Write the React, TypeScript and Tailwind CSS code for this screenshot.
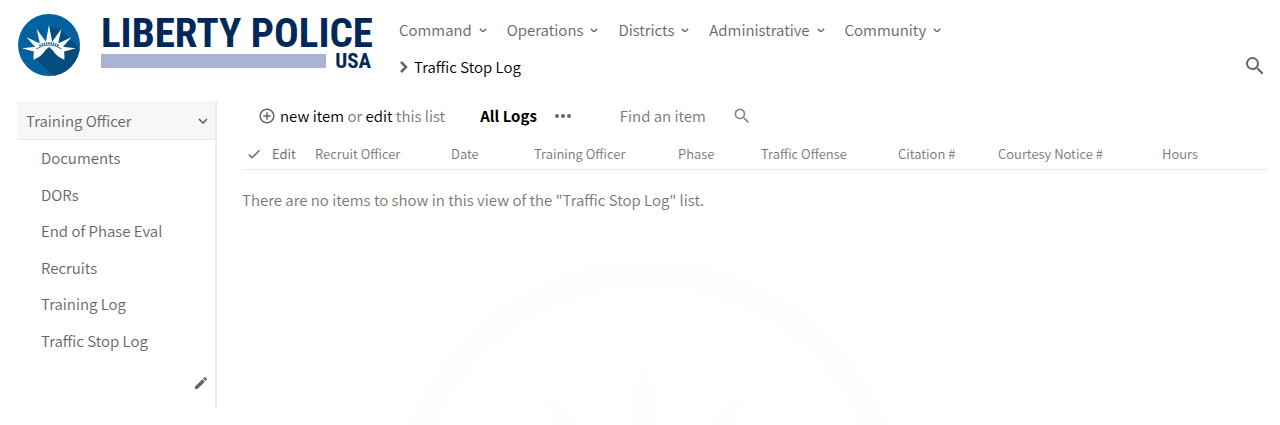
import React from "react";
import { MdAddCircleOutline, MdEdit, MdSearch, MdCheck } from "react-icons/md";

const navItems = ["Command", "Operations", "Districts", "Administrative", "Community"];

const sideItems = [
  "Documents",
  "DORs",
  "End of Phase Eval",
  "Recruits",
  "Training Log",
  "Traffic Stop Log",
];

const columns = [
  { label: "Recruit Officer", width: "w-[136px]" },
  { label: "Date", width: "w-[83px]" },
  { label: "Training Officer", width: "w-[144px]" },
  { label: "Phase", width: "w-[83px]" },
  { label: "Traffic Offense", width: "w-[137px]" },
  { label: "Citation #", width: "w-[100px]" },
  { label: "Courtesy Notice #", width: "w-[164px]" },
  { label: "Hours", width: "" },
];

function Chevron({ className }: { className: string }) {
  return (
    <svg viewBox="0 0 10 6" className={className} fill="none" stroke="currentColor" strokeWidth="1.7" aria-hidden="true">
      <path d="M1 1l4 4 4-4" />
    </svg>
  );
}

function CrownEmblem() {
  return (
    <svg viewBox="0 0 186 186" className="size-[62px] shrink-0" aria-hidden="true">
      <defs>
        <clipPath id="disc">
          <circle cx="93" cy="93" r="93" />
        </clipPath>
      </defs>
      <circle cx="93" cy="93" r="93" fill="#02619f" />
      <g clipPath="url(#disc)">
        <path d="M93 36L127 46L186 105V186H108L48 130L93 90Z" fill="#044d7e" />
      </g>
      <g fill="#fff">
        <path d="M93 33l9 48H84z" />
        <path d="M56 45l26 36-16 10z" />
        <path d="M130 45l-26 36 16 10z" />
        <path d="M26 70l38 18-10 14z" />
        <path d="M160 70l-38 18 10 14z" />
        <path d="M12 103l42-5-4 15z" />
        <path d="M174 103l-42-5 4 15z" />
        <path d="M47 137C45 116 50 98 62 88Q93 72 124 88C136 98 141 116 139 137Q115 128 104 109L93 99L82 109Q71 128 47 137Z" />
      </g>
      <path d="M55 105Q93 80 131 105" fill="none" stroke="#02558c" strokeWidth="2.5" />
      <path d="M64 95Q93 80 122 95" fill="none" stroke="#02558c" strokeWidth="6" strokeDasharray="4 3" />
    </svg>
  );
}

function Watermark() {
  return (
    <div className="pointer-events-none absolute inset-0 -z-10 flex justify-center overflow-hidden pt-[262px]">
      <svg viewBox="0 0 530 514" className="h-[514px] w-[530px] shrink-0" aria-hidden="true">
        <circle cx="273" cy="257" r="245" fill="none" stroke="#fdfdfd" strokeWidth="23" />
        <g fill="#fdfdfd">
          <path d="M265 108q4-5 8 0l12 92h-32z" />
          <path d="M172 136q4-3 7 1l55 63h-42z" />
          <path d="M366 136q-4-3-7 1l-55 63h42z" />
        </g>
      </svg>
    </div>
  );
}

export default function App() {
  return (
    <div className="relative isolate min-h-screen bg-white font-['Noto_Sans_CJK_SC','Noto_Sans_CJK_JP',sans-serif] text-[15px] leading-5 font-[350] text-[#666666]">
      <Watermark />
      <header className="flex pt-[14px] pr-[13px] pl-[18px]">
        <a href="#home" className="flex gap-[21px]" aria-label="Liberty Police USA">
          <CrownEmblem />
          <div className="flex w-[270px] flex-col font-['Roboto_Condensed','Liberation_Sans_Narrow',sans-serif] font-bold text-[#00285a]">
            <span className="h-10 text-[41px] leading-[38px] whitespace-nowrap">LIBERTY POLICE</span>
            <span className="flex items-center justify-between">
              <span className="h-[14px] w-[225px] bg-[#abb3d4]" />
              <span className="text-[21px] leading-[14px]">USA</span>
            </span>
          </div>
        </a>
        <div className="flex grow flex-col pl-[28px]">
          <nav className="flex gap-5 pt-[6px]">
            {navItems.map((item) => (
              <a key={item} href="#nav" className="flex items-center gap-[7px]">
                {item}
                <Chevron className="w-[8px]" />
              </a>
            ))}
          </nav>
          <div className="flex items-center justify-between pt-[14px]">
            <h1 className="flex items-center gap-[5px] pt-[2px] text-black">
              <svg viewBox="0 0 10 12" className="h-3 w-[10px] text-[#666666]" fill="none" stroke="currentColor" strokeWidth="2.6" aria-hidden="true">
                <path d="M2 1l5 5-5 5" />
              </svg>
              Traffic Stop Log
            </h1>
            <button type="button" aria-label="Search">
              <MdSearch className="size-6" />
            </button>
          </div>
        </div>
      </header>

      <div className="flex pt-[23px] pr-3 pl-[17px]">
        <aside className="flex h-[307px] w-[200px] shrink-0 flex-col border-r-2 border-[#ebebeb]">
          <a href="#training" className="flex h-[39px] items-center justify-between border-b border-[#ebebeb] bg-[#f7f7f7] pt-[2px] pr-[7px] pl-[9px]">
            Training Officer
            <Chevron className="w-[10px]" />
          </a>
          <ul className="grid h-[219px] auto-rows-fr pl-6">
            {sideItems.map((item) => (
              <li key={item} className="flex items-center">
                <a href="#list">{item}</a>
              </li>
            ))}
          </ul>
          <button type="button" aria-label="Edit links" className="mt-4 mr-[6px] self-end">
            <MdEdit className="size-4" />
          </button>
        </aside>

        <main className="min-w-0 grow pl-[25px]">
          <div className="flex h-[30px] items-center pl-[16px]">
            <div className="flex items-center gap-1 text-[#777777]">
              <MdAddCircleOutline className="size-[18px] text-[#666666]" />
              <span>
                <a href="#new" className="text-black">new item</a> or{" "}
                <a href="#edit" className="text-black">edit</a> this list
              </span>
            </div>
            <a href="#all" className="pl-[35px] font-bold text-black">All Logs</a>
            <button type="button" aria-label="More views" className="ml-[18px]">
              <svg viewBox="0 0 16 4" className="h-1 w-4" fill="currentColor">
                <circle cx="2" cy="2" r="2" />
                <circle cx="8" cy="2" r="2" />
                <circle cx="14" cy="2" r="2" />
              </svg>
            </button>
            <form className="flex items-center pl-[49px]">
              <input
                type="search"
                aria-label="Find an item"
                placeholder="Find an item"
                className="w-[112px] bg-transparent outline-none placeholder:text-[#777777]"
              />
              <button type="button" aria-label="Find">
                <MdSearch className="size-5 text-[#888888]" />
              </button>
            </form>
          </div>
          <table className="mt-2 w-full table-fixed border-b border-[#ebebeb] text-left text-[13px] text-[#777777]">
            <thead>
              <tr className="h-[30px]">
                <th className="w-[30px] pl-1" aria-label="Select">
                  <MdCheck className="size-4 text-[#666666]" />
                </th>
                <th className="w-[43px] font-[350] text-[#666666]">Edit</th>
                {columns.map((column) => (
                  <th key={column.label} className={`${column.width} font-[350] whitespace-nowrap`}>
                    {column.label}
                  </th>
                ))}
              </tr>
            </thead>
          </table>
          <p className="pt-5 text-[#777777]">
            There are no items to show in this view of the "Traffic Stop Log" list.
          </p>
        </main>
      </div>
    </div>
  );
}
